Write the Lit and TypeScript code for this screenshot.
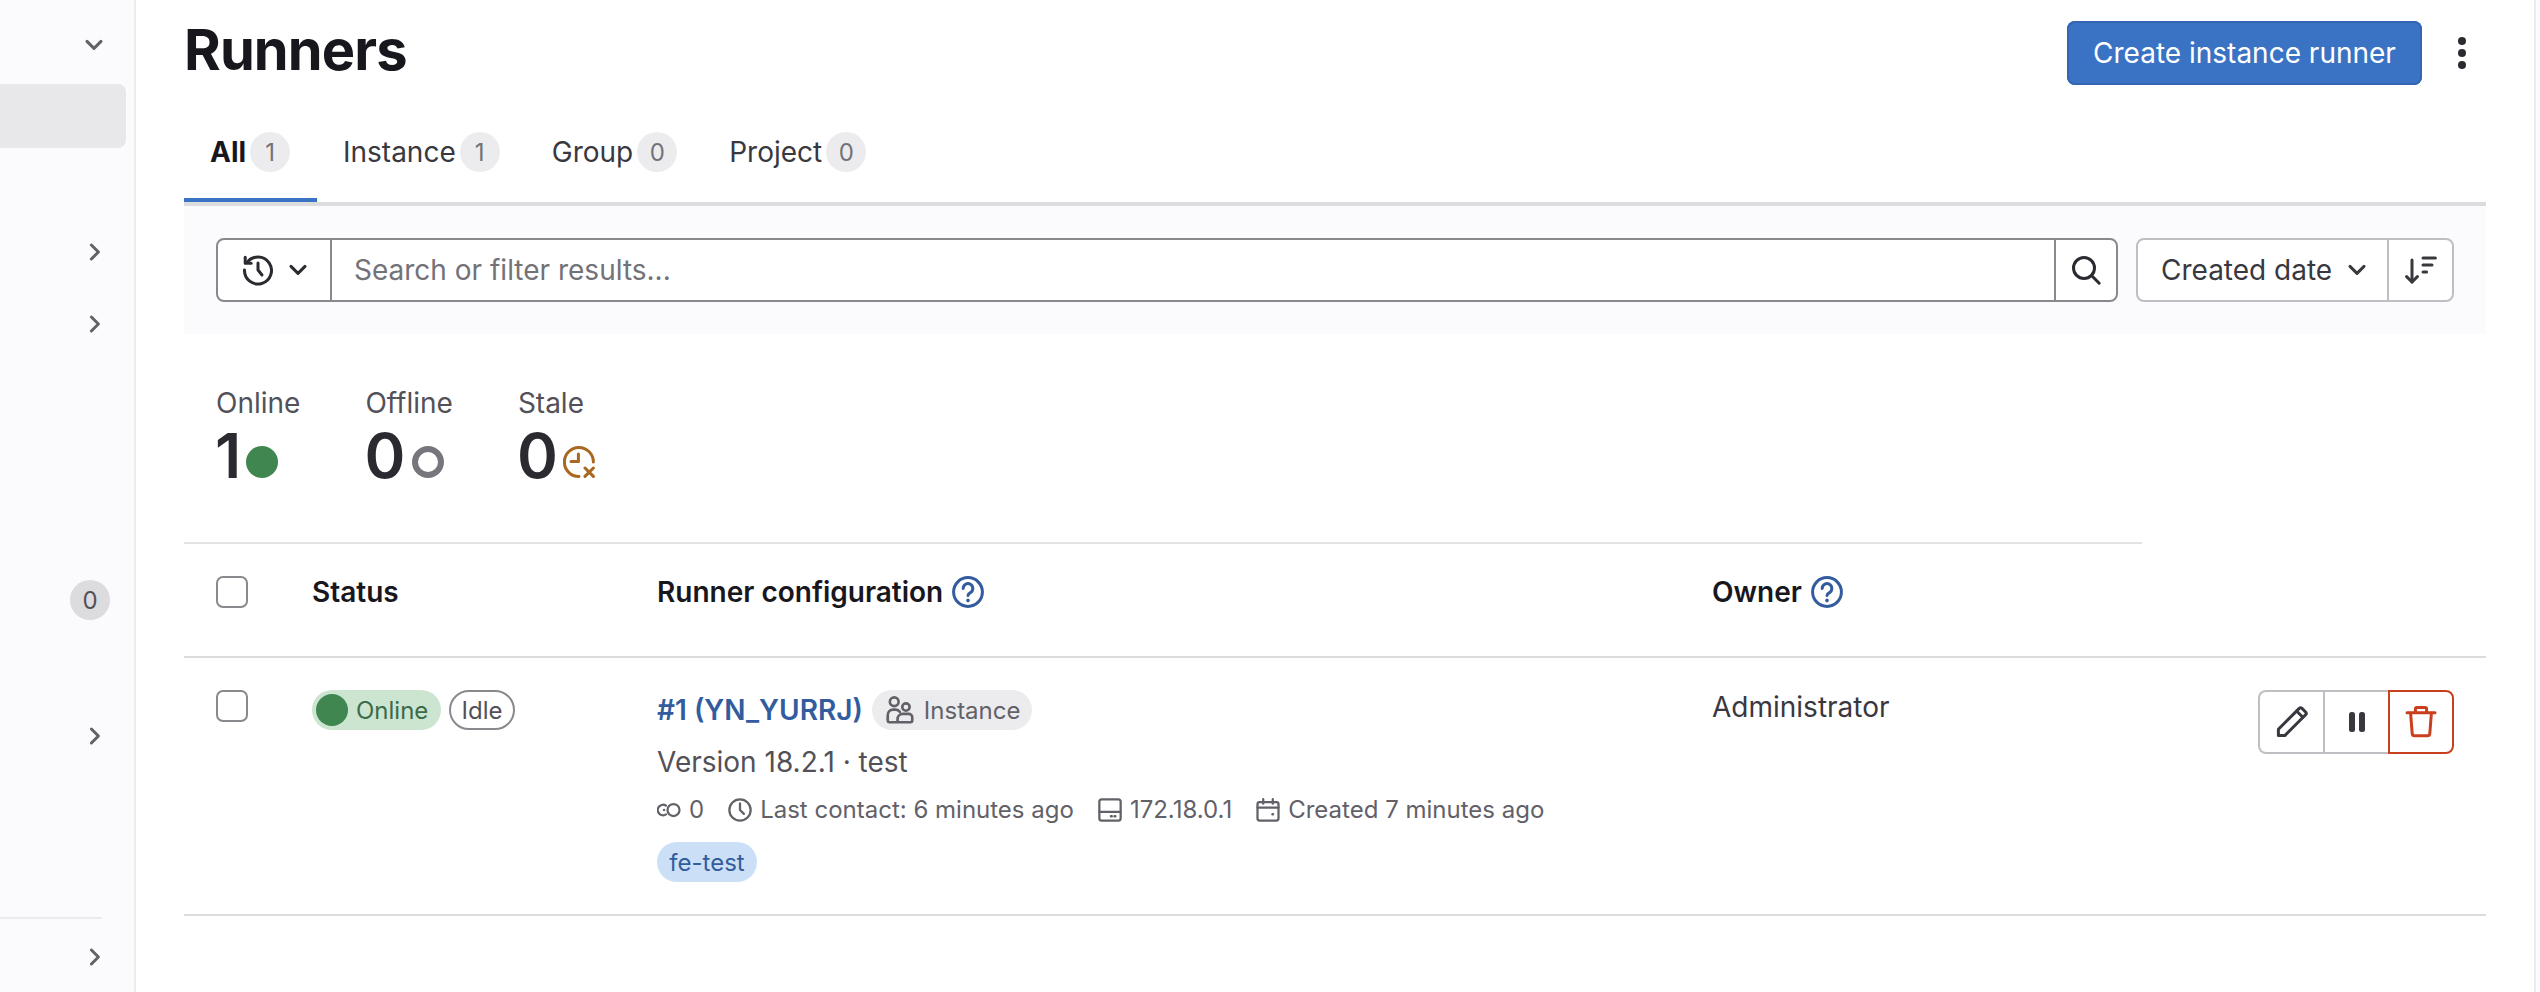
import { LitElement, html, css, svg } from "lit";
import { customElement } from "lit/decorators.js";

const ic = (size: number, cls: string, body: unknown) => html`<svg class=${"ic " + cls} width=${size} height=${size} viewBox="0 0 16 16" fill="none" stroke="currentColor" stroke-width="1.5" stroke-linecap="round" stroke-linejoin="round">${body}</svg>`;

const chevDown = svg`<path d="M4.5 6.2L8 9.7l3.5-3.5"/>`;
const chevRight = svg`<path d="M6.2 4.5L9.7 8l-3.5 3.5"/>`;
const history = svg`<path d="M2.6 4.2A6.75 6.75 0 1 1 1.25 8"/><path d="M1.6 1.6v3h3"/><path d="M8 4.5V8l2 2.5"/>`;
const search = svg`<circle cx="7" cy="7" r="5.25"/><path d="M11 11l3.6 3.6"/>`;
const sort = svg`<path d="M3.5 3v11"/><path d="M.8 11.3l2.7 2.7 2.7-2.7"/><path d="M9 2h6.2M9 5.5h4.5M9 9h1.8"/>`;
const stale = svg`<path d="M15.2 8A7.25 7.25 0 1 0 8 15.25" /><path d="M7.7 4v3.8H4"/><path d="M11 11l4.2 4.2M15.2 11L11 15.2"/>`;
const users = svg`<circle cx="4.7" cy="3.3" r="2.5"/><circle cx="11.4" cy="6.3" r="2.1"/><path d="M1 13v-2.2a3 3 0 0 1 3-3h1.5a3 3 0 0 1 2.5 1.3"/><path d="M6.6 15H2a1 1 0 0 1-1-1v-1"/><path d="M6.6 14v-.8a3 3 0 0 1 3-3h3.4a2 2 0 0 1 2 2V14a1 1 0 0 1-1 1H7.6a1 1 0 0 1-1-1z"/>`;
const link = svg`<circle cx="11" cy="8" r="4"/><path d="M6 5.1A3.5 3.5 0 1 0 6 10.9"/><circle cx="4.7" cy="8" r=".8" fill="currentColor" stroke="none"/>`;
const clock = svg`<circle cx="8" cy="8" r="7.1"/><path d="M8 3.6V8l2.6 2.6"/>`;
const server = svg`<rect x=".9" y=".9" width="14.2" height="14.2" rx="1.6"/><path d="M1 9.2h14"/><path d="M8.6 12.2h.6M11 12.2h.6" stroke-width="1.6"/>`;
const calendar = svg`<rect x="1" y="2.8" width="14" height="12.2" rx="1.3"/><path d="M1 6.4h14M4.8 .8v3M11.2 .8v3"/><path d="M11 10.8h.3" stroke-width="1.6"/>`;
const pencil = svg`<path d="M1.2 14.8v-3.2L11.6 1.2a1 1 0 0 1 1.4 0l1.8 1.8a1 1 0 0 1 0 1.4L4.4 14.8z"/><path d="M10.4 2.6l3 3"/>`;
const trash = svg`<path d="M1 3.4h14"/><path d="M5.2 3.2V1.6a.8.8 0 0 1 .8-.8h4a.8.8 0 0 1 .8.8v1.6"/><path d="M2.8 3.6l.8 10.2a1.2 1.2 0 0 0 1.2 1.1h6.4a1.2 1.2 0 0 0 1.2-1.1l.8-10.2"/>`;
const help = svg`<circle cx="8" cy="8" r="7.2"/><path d="M5.6 6.2a2.4 2.4 0 1 1 3.6 2.1c-.8.45-1.2.8-1.2 1.5"/><path d="M8 12.2v.1" stroke-width="1.8"/>`;
const dots = svg`<circle cx="8" cy="2" r="2" fill="currentColor" stroke="none"/><circle cx="8" cy="8" r="2" fill="currentColor" stroke="none"/><circle cx="8" cy="14" r="2" fill="currentColor" stroke="none"/>`;

@customElement("app-root")
export class AppRoot extends LitElement {
  static styles = css`
    :host { display: block; width: 2540px; height: 992px; overflow: hidden; background: #fff; font-family: Inter, "Noto Sans", sans-serif; color: #1f1e24; }
    * { box-sizing: border-box; }
    .ic { display: block; flex: none; }
    .page { display: flex; height: 992px; position: relative; }

    .side { width: 136px; flex: none; background: #fbfafd; border-right: 2px solid #ececef; display: flex; flex-direction: column; color: #626168; }
    .si { display: flex; align-items: center; justify-content: flex-end; padding-right: 23px; }
    .si.h84 { height: 84px; padding-top: 6px; padding-right: 24px; }
    .active { height: 64px; width: 126px; background: #e8e8ea; border-radius: 0 8px 8px 0; }
    .s1 { height: 72px; }
    .gap68 { margin-top: 68px; }
    .bwrap { height: 40px; margin-top: 220px; padding-right: 26px; }
    .badge0 { width: 40px; height: 40px; border-radius: 50%; background: #dcdcde; color: #535158; font-size: 24px; display: flex; align-items: center; justify-content: center; margin-right: -2px; }
    .mid { height: 40px; margin-top: 96px; }
    .rule { width: 102px; height: 2px; background: #ececef; margin-top: 161px; }
    .last { height: 72px; padding-top: 4px; }

    .main { flex: none; width: 2302px; margin-left: 48px; }
    .top { display: flex; height: 106px; align-items: flex-start; justify-content: space-between; }
    h1 { margin: 16px 0 0; font-size: 56px; line-height: 68px; font-weight: 700; letter-spacing: -0.9px; color: #18171d; }
    .topr { display: flex; align-items: center; padding-top: 21px; }
    .primary { width: 355px; height: 64px; border-radius: 8px; background: #3a72c4; box-shadow: inset 0 0 0 2px #3565b2; color: #fff; font-size: 28px; display: flex; align-items: center; justify-content: center; }
    .more { margin-left: 24px; margin-right: 8px; color: #2b2a31; }

    .tabs { display: flex; height: 100px; border-bottom: 4px solid #dcdcde; }
    .tab { display: flex; align-items: center; gap: 4px; height: 96px; padding: 0 26px 4px; font-size: 28px; color: #3a383f; }
    .tab:first-child { width: 133px; font-weight: 700; color: #18171d; margin-bottom: -4px; height: 96px; border-bottom: 4px solid #3a72c4; padding-bottom: 0; }
    .count { height: 40px; min-width: 40px; border-radius: 20px; background: #ececef; color: #737278; font-size: 24px; font-weight: 400; display: flex; align-items: center; justify-content: center; }

    .filter { display: flex; gap: 18px; height: 128px; background: #fbfafd; padding: 32px 32px 0; }
    .fgroup { display: flex; height: 64px; background: #fff; border: 2px solid #89888d; border-radius: 8px; flex: none; width: 1902px; }
    .hist { width: 114px; border-right: 2px solid #89888d; display: flex; align-items: center; gap: 8px; padding-left: 24px; color: #2b2a31; }
    .finput { flex: 1; font-size: 28px; color: #737278; display: flex; align-items: center; padding-left: 22px; }
    .fbtn { width: 62px; border-left: 2px solid #89888d; display: flex; align-items: center; justify-content: center; color: #2b2a31; }
    .sortg { display: flex; height: 64px; width: 318px; flex: none; background: #fff; border: 2px solid #bfbfc3; border-radius: 8px; color: #3a383f; }
    .sortl { width: 251px; border-right: 2px solid #bfbfc3; display: flex; align-items: center; gap: 9px; padding-left: 23px; font-size: 28px; }
    .sortb { flex: 1; display: flex; align-items: center; justify-content: center; }

    .stats { display: flex; height: 208px; padding: 52px 0 0 32px; }
    .stat { display: flex; flex-direction: column; }
    .stat + .stat { margin-left: 65px; }
    .slabel { font-size: 28px; line-height: 34px; color: #535158; height: 36px; }
    .sval { display: flex; align-items: center; gap: 5px; font-size: 62px; font-weight: 600; line-height: 62px; height: 62px; margin: 3px 0 0 -1px; color: #2b2a31; }
    .dot { width: 32px; height: 32px; border-radius: 50%; background: #3f8650; margin-top: 12px; }
    .ring { width: 32px; height: 32px; border-radius: 50%; border: 6px solid #77767c; margin: 12px 0 0 2px; }
    .staleic { color: #a9671f; margin: 12px 0 0 0; }

    .tw { width: 1958px; border-top: 2px solid #e3e3e5; }
    .grid { display: grid; grid-template-columns: 128px 345px 1055px 1fr; width: 2302px; }
    .thead { height: 114px; border-bottom: 2px solid #dcdcde; align-items: start; padding-top: 32px; font-size: 28px; line-height: 32px; font-weight: 600; color: #18171d; }
    .thc { display: flex; align-items: center; gap: 9px; height: 32px; }
    .cb { width: 32px; height: 32px; margin-left: 32px; border: 2px solid #89888d; border-radius: 7px; background: #fff; }
    .help { color: #335c9e; }
    .trow { height: 258px; border-bottom: 2px solid #dcdcde; padding-top: 32px; align-items: start; }
    .badges { display: flex; gap: 8px; }
    .online { display: flex; align-items: center; width: 129px; height: 40px; border-radius: 20px; background: #cce5d1; padding-left: 4px; gap: 8px; color: #3b6b48; font-size: 24px; }
    .online i { width: 32px; height: 32px; border-radius: 50%; background: #3f8650; display: block; }
    .idle { width: 66px; height: 40px; border-radius: 20px; border: 2px solid #89888d; color: #535158; font-size: 24px; display: flex; align-items: center; justify-content: center; }
    .cfg { display: flex; flex-direction: column; }
    .titlerow { display: flex; align-items: center; gap: 9px; height: 40px; }
    .link { font-size: 28px; font-weight: 600; color: #335c9e; }
    .inst { display: flex; align-items: center; gap: 10px; height: 40px; width: 160px; border-radius: 20px; background: #ececef; color: #626168; font-size: 24px; padding-left: 14px; }
    .ver { font-size: 28px; line-height: 40px; margin-top: 12px; color: #535158; }
    .meta { display: flex; align-items: center; font-size: 24px; line-height: 32px; color: #626168; margin-top: 12px; height: 32px; }
    .meta span { display: flex; align-items: center; gap: 8px; }
    .meta span + span { margin-left: 24px; }
    .tag { margin-top: 16px; height: 40px; width: 100px; border-radius: 20px; background: #cbe0f7; color: #335c9e; font-size: 24px; display: flex; align-items: center; justify-content: center; }
    .ownercell { display: flex; justify-content: space-between; align-items: flex-start; padding-right: 32px; }
    .owner { font-size: 28px; line-height: 34px; color: #3a383f; }
    .agroup { display: flex; width: 196px; height: 64px; }
    .ab { width: 65px; height: 64px; border: 2px solid #bfbfc3; border-right: none; display: flex; align-items: center; justify-content: center; color: #3a383f; background: #fff; }
    .ab:first-child { border-radius: 8px 0 0 8px; }
    .ab.del { width: 66px; border: 2px solid #c9401f; border-radius: 0 8px 8px 0; color: #c9401f; }
    .pause { display: flex; gap: 4px; }
    .pause b { display: block; width: 6px; height: 20px; border-radius: 2.5px; background: #3a383f; }
    .edge { position: absolute; top: 0; left: 2534px; width: 6px; height: 992px; background: #fbfafd; border-left: 2px solid #ececef; }
  `;

  render() {
    return html`<div class="page">
      <aside class="side">
        <div class="si h84">${ic(32, "", chevDown)}</div>
        <div class="active"></div>
        <div class="si s1 gap68">${ic(32, "", chevRight)}</div>
        <div class="si s1">${ic(32, "", chevRight)}</div>
        <div class="si bwrap"><div class="badge0">0</div></div>
        <div class="si mid">${ic(32, "", chevRight)}</div>
        <div class="rule"></div>
        <div class="si last">${ic(32, "", chevRight)}</div>
      </aside>
      <main class="main">
        <div class="top">
          <h1>Runners</h1>
          <div class="topr">
            <div class="primary">Create instance runner</div>
            <div class="more">${ic(32, "", dots)}</div>
          </div>
        </div>
        <div class="tabs">
          <div class="tab">All<span class="count">1</span></div>
          <div class="tab">Instance<span class="count">1</span></div>
          <div class="tab">Group<span class="count">0</span></div>
          <div class="tab">Project<span class="count">0</span></div>
        </div>
        <div class="filter">
          <div class="fgroup">
            <div class="hist">${ic(32, "", history)}${ic(32, "", chevDown)}</div>
            <div class="finput">Search or filter results...</div>
            <div class="fbtn">${ic(32, "", search)}</div>
          </div>
          <div class="sortg">
            <div class="sortl">Created date ${ic(32, "", chevDown)}</div>
            <div class="sortb">${ic(32, "", sort)}</div>
          </div>
        </div>
        <div class="stats">
          <div class="stat"><div class="slabel">Online</div><div class="sval">1<span class="dot"></span></div></div>
          <div class="stat"><div class="slabel">Offline</div><div class="sval">0<span class="ring"></span></div></div>
          <div class="stat"><div class="slabel">Stale</div><div class="sval">0<span class="staleic">${ic(32, "", stale)}</span></div></div>
        </div>
        <div class="tw">
          <div class="grid thead">
            <div><div class="cb"></div></div>
            <div>Status</div>
            <div class="thc">Runner configuration ${ic(32, "help", help)}</div>
            <div class="thc">Owner ${ic(32, "help", help)}</div>
          </div>
          <div class="grid trow">
            <div><div class="cb"></div></div>
            <div class="badges"><div class="online"><i></i>Online</div><div class="idle">Idle</div></div>
            <div class="cfg">
              <div class="titlerow"><span class="link">#1 (YN_YURRJ)</span><span class="inst">${ic(28, "", users)}Instance</span></div>
              <div class="ver">Version 18.2.1 · test</div>
              <div class="meta">
                <span>${ic(24, "", link)}0</span>
                <span>${ic(24, "", clock)}Last contact: 6 minutes ago</span>
                <span>${ic(24, "", server)}172.18.0.1</span>
                <span>${ic(24, "", calendar)}Created 7 minutes ago</span>
              </div>
              <div class="tag">fe-test</div>
            </div>
            <div class="ownercell">
              <div class="owner">Administrator</div>
              <div class="agroup">
                <div class="ab">${ic(32, "", pencil)}</div>
                <div class="ab"><div class="pause"><b></b><b></b></div></div>
                <div class="ab del">${ic(32, "", trash)}</div>
              </div>
            </div>
          </div>
        </div>
      </main>
      <div class="edge"></div>
    </div>`;
  }
}
